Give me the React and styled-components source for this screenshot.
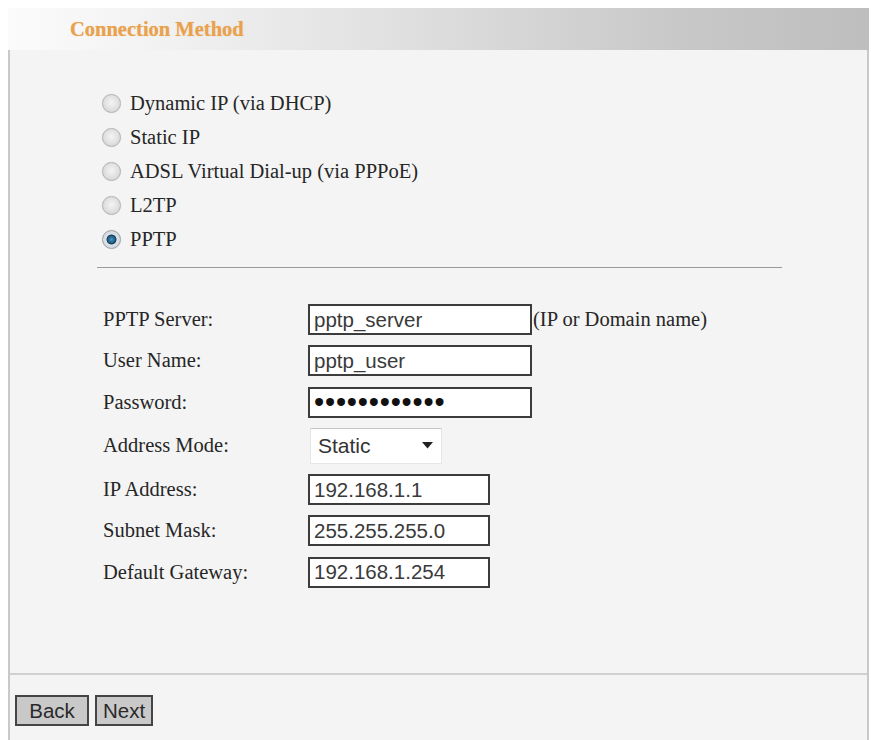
import React from "react";
import styled, { createGlobalStyle } from "styled-components";

const Global = createGlobalStyle`
  html, body { margin: 0; padding: 0; background: #ffffff; }
  body { font-family: "Liberation Serif", "Times New Roman", serif; }
  * { box-sizing: border-box; }
`;

const Page = styled.div`
  width: 871px;
  height: 740px;
  padding: 8px 2px 0 8px;
  display: flex;
  flex-direction: column;
  overflow: hidden;
`;

const Header = styled.div`
  height: 42px;
  display: flex;
  align-items: center;
  padding-left: 62px;
  background: linear-gradient(to right, #fbfbfb 0%, #f4f4f4 14%, #e0e0e0 45%, #c8c8c8 78%, #bebebe 100%);
`;

const Title = styled.h1`
  margin: 0;
  font-family: "Liberation Serif", "Times New Roman", serif;
  font-weight: bold;
  font-size: 20.5px;
  color: #e9a14e;
  text-shadow: 0 0 1px rgba(233, 161, 78, 0.5);
`;

const Panel = styled.div`
  flex: 1;
  display: flex;
  flex-direction: column;
  background: #f4f4f4;
  border-left: 2px solid #c9c9c9;
  border-right: 2px solid #c9c9c9;
`;

const RadioGroup = styled.div`
  display: flex;
  flex-direction: column;
  padding: 36px 0 0 87px;
`;

const RadioRow = styled.label`
  height: 34px;
  display: flex;
  align-items: center;
  gap: 9px;
  padding-left: 5px;
  font-size: 20.5px;
  color: #262626;
`;

const Radio = styled.input.attrs({ type: "radio" })`
  appearance: none;
  margin: 0;
  width: 19px;
  height: 19px;
  border-radius: 50%;
  border: 1px solid #b4b4b4;
  background: radial-gradient(circle at 50% 45%, #f4f4f4 0%, #e2e2e2 50%, #cacaca 100%);
  box-shadow: 0 0 1px rgba(0, 0, 0, 0.15);
  &:checked {
    border-color: #9aa4ad;
    background: radial-gradient(circle at 50% 50%, #4a98bf 0%, #22648c 26%, #163f5c 38%, #e0e4e8 45%, #c6cbd0 100%);
  }
`;

const Separator = styled.hr`
  margin: 11px 0 0 87px;
  width: 685px;
  height: 0;
  border: 0;
  border-top: 1px solid #9a9a9a;
`;

const Form = styled.div`
  display: grid;
  grid-template-columns: 205px auto;
  row-gap: 10.3px;
  align-items: center;
  margin-top: 36px;
  padding-left: 93px;
`;

const Label = styled.span`
  font-size: 20.5px;
  color: #262626;
`;

const Field = styled.div`
  display: flex;
  align-items: center;
`;

const TextInput = styled.input`
  width: ${(p) => p.$w}px;
  height: 31px;
  margin: 0;
  padding: 0 4px;
  border: 2px solid #3c3c3c;
  border-radius: 0;
  background: #ffffff;
  font-family: "Liberation Sans", Arial, sans-serif;
  font-size: 20.5px;
  color: #3a3a3a;
  outline: none;
  &[type="password"] {
    font-size: 29px;
    letter-spacing: 0.8px;
    color: #111;
  }
`;

const Hint = styled.span`
  font-size: 20.5px;
  color: #262626;
  margin-left: 1px;
`;

const SelectBox = styled.div`
  width: 132px;
  height: 36px;
  margin-left: 2px;
  display: flex;
  align-items: center;
  justify-content: space-between;
  padding: 0 8px 0 7px;
  background: #ffffff;
  border: 1px solid #e6e6e6;
  border-top-color: #c4c4c4;
  font-family: "Liberation Sans", Arial, sans-serif;
  font-size: 21px;
  color: #333;
`;

const Spacer = styled.div`
  flex: 1;
`;

const Footer = styled.div`
  height: 67px;
  border-top: 2px solid #d0d0d0;
  display: flex;
  align-items: flex-start;
  gap: 6px;
  padding: 20px 0 0 5px;
`;

const Button = styled.button`
  width: ${(p) => p.$w}px;
  height: 31px;
  margin: 0;
  padding: 0;
  border: 2px solid #454545;
  border-radius: 0;
  background: #c9c9c9;
  font-family: "Liberation Sans", Arial, sans-serif;
  font-size: 20.5px;
  color: #2a2a2a;
`;

const methods = [
  "Dynamic IP (via DHCP)",
  "Static IP",
  "ADSL Virtual Dial-up (via PPPoE)",
  "L2TP",
  "PPTP",
];

export default function App() {
  return (
    <>
      <Global />
      <Page>
        <Header>
          <Title>Connection Method</Title>
        </Header>
        <Panel>
          <RadioGroup>
            {methods.map((m) => (
              <RadioRow key={m}>
                <Radio name="method" defaultChecked={m === "PPTP"} />
                {m}
              </RadioRow>
            ))}
          </RadioGroup>
          <Separator />
          <Form>
            <Label>PPTP Server:</Label>
            <Field>
              <TextInput $w={224} defaultValue="pptp_server" />
              <Hint>(IP or Domain name)</Hint>
            </Field>
            <Label>User Name:</Label>
            <Field>
              <TextInput $w={224} defaultValue="pptp_user" />
            </Field>
            <Label>Password:</Label>
            <Field>
              <TextInput $w={224} type="password" defaultValue="pptppassword" />
            </Field>
            <Label>Address Mode:</Label>
            <Field>
              <SelectBox>
                <span>Static</span>
                <svg width="11" height="7" viewBox="0 0 11 7">
                  <path d="M0 0 L11 0 L5.5 6.5 Z" fill="#222" />
                </svg>
              </SelectBox>
            </Field>
            <Label>IP Address:</Label>
            <Field>
              <TextInput $w={182} defaultValue="192.168.1.1" />
            </Field>
            <Label>Subnet Mask:</Label>
            <Field>
              <TextInput $w={182} defaultValue="255.255.255.0" />
            </Field>
            <Label>Default Gateway:</Label>
            <Field>
              <TextInput $w={182} defaultValue="192.168.1.254" />
            </Field>
          </Form>
          <Spacer />
          <Footer>
            <Button $w={74}>Back</Button>
            <Button $w={58}>Next</Button>
          </Footer>
        </Panel>
      </Page>
    </>
  );
}
